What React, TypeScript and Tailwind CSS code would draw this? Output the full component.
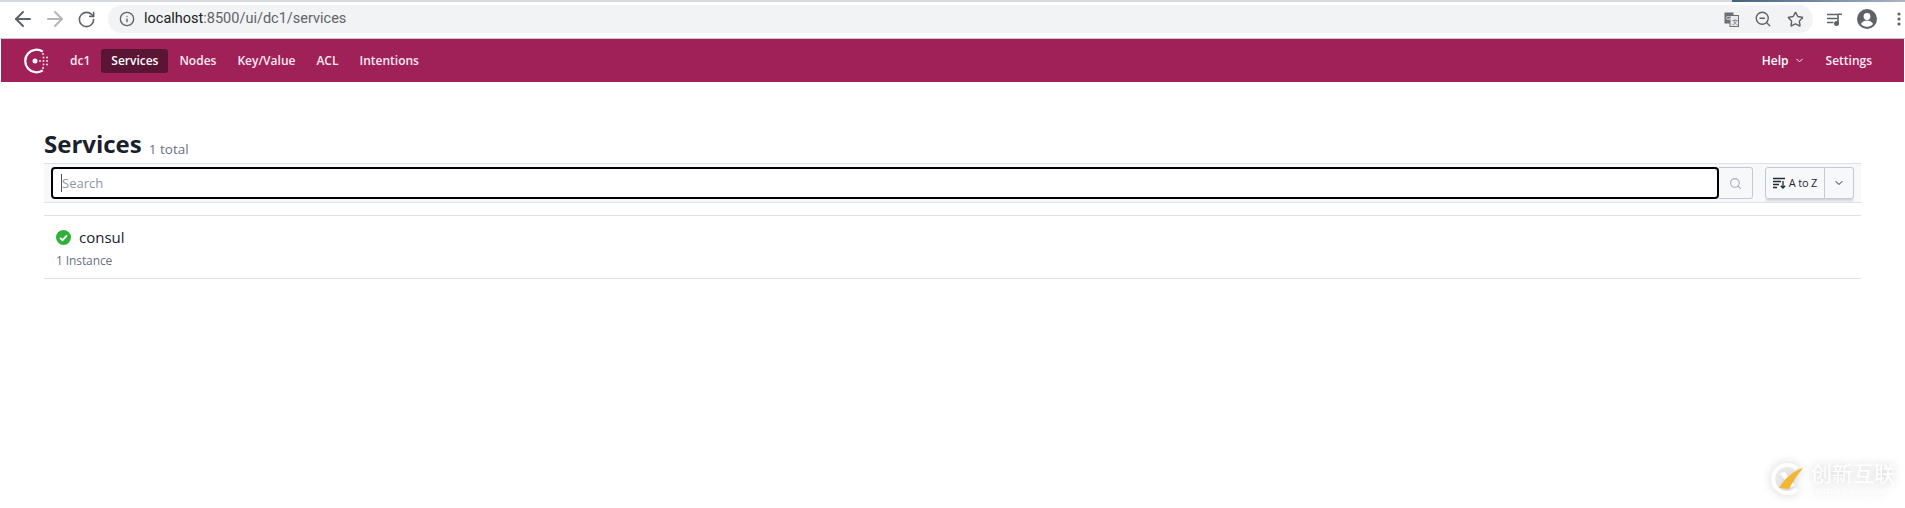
import { ArrowLeft, ArrowRight, RotateCw, Info, ZoomOut, Star, ChevronDown, Search } from 'lucide-react'

const NAV = [
  { label: 'Services', active: true },
  { label: 'Nodes' },
  { label: 'Key/Value' },
  { label: 'ACL' },
  { label: 'Intentions' },
]

function ConsulLogo() {
  return (
    <svg width="26" height="26" viewBox="0 0 26 26" fill="none">
      <path d="M19.8 3.600A11.300 11.300 0 1 0 19.800 22.400" stroke="#fff" strokeWidth="2.300" />
      <circle cx="12" cy="13" r="2.500" fill="#fff" />
      <g fill="#f3dbe5">
        <circle cx="17" cy="13" r="1" />
        <circle cx="20.500" cy="13" r="1" />
        <circle cx="24" cy="13" r="1" />
        <circle cx="20.500" cy="9.500" r="1" />
        <circle cx="24" cy="9.500" r="1" />
        <circle cx="20.500" cy="16.500" r="1" />
        <circle cx="24" cy="16.500" r="1" />
        <circle cx="20" cy="6" r="1" />
        <circle cx="20" cy="20" r="1" />
      </g>
    </svg>
  )
}

function SortIcon() {
  return (
    <svg width="13" height="12" viewBox="0 0 13 12" fill="none" stroke="#1f2937" strokeWidth="1.300">
      <path d="M0 1.500h12M0 4.500h8M0 7.500h6M0 10.500h4" />
      <path d="M10 4v7M7.800 8.800 10 11l2.200-2.200" />
    </svg>
  )
}

function QueueIcon() {
  return (
    <svg width="15" height="13" viewBox="0 0 15 13" fill="none" stroke="#5f6368" strokeWidth="1.600">
      <path d="M0 1.500h10.500M0 5.500h10.500M0 9.500h6.500" />
      <path d="M11 10.500V1.200h4" />
      <circle cx="9.500" cy="10.500" r="1.700" fill="#5f6368" />
    </svg>
  )
}

function Watermark() {
  return (
    <div className="absolute bottom-[13px] right-[10px] flex items-center gap-[8px] [filter:drop-shadow(0_0_5px_rgba(0,0,0,0.22))]">
      <svg width="32" height="32" viewBox="0 0 32 32" fill="none" className="mt-[5px]">
        <path d="M26 6A14 14 0 1 0 26 26" stroke="#fff" strokeWidth="4" />
        <path d="M9 10l5-1 10 14-5 1z" fill="#fff" />
        <path d="M8 25C14 15 22 8 32 5 27 11 22 18 18 26z" fill="#f3b533" />
      </svg>
      <div className="flex flex-col text-white">
        <span className="font-['Noto_Sans_CJK_SC',sans-serif] text-[21px] leading-[31px]">创新互联</span>
        <span className="text-[6.500px] leading-[7px] tracking-[0.4px]">CHUANG XIN HU LIAN</span>
      </div>
    </div>
  )
}

export default function App() {
  return (
    <div className="relative h-[508px] w-[1905px] overflow-hidden bg-white font-['Open_Sans','Noto_Sans',sans-serif] text-[#1f2937]">
      <div className="flex h-[2px]">
        <div className="flex-1 bg-[#d5dbe1]" />
        <div className="w-[173px] bg-gradient-to-r from-[#45607f] to-[#a9b6c4]" />
      </div>
      {/* barra do navegador */}
      <div className="flex h-[37px] items-center border-b border-[#c8c9cc] pb-[2px] pl-[11px] pr-[4px]">
        <ArrowLeft size={24} strokeWidth={2} className="text-[#5f6368]" />
        <ArrowRight size={24} strokeWidth={2} className="ml-[8px] text-[#b4b6b9]" />
        <RotateCw size={19} strokeWidth={2} className="ml-[10px] text-[#5f6368]" />
        <div className="ml-[12px] flex h-[28px] flex-1 items-center rounded-full bg-[#f1f3f4] pl-[11px] pr-[9px]">
          <Info size={16} strokeWidth={2} className="text-[#5f6368]" />
          <span className="ml-[9px] font-['Roboto',sans-serif] text-[14.500px] text-[#5f6368]">
            <span className="text-[#202124]">localhost</span>:8500/ui/dc1/services
          </span>
          <div className="flex-1" />
          <svg width="15" height="15" viewBox="0 0 15 15" className="mr-[15px]">
            <rect x="0.500" y="0.500" width="9" height="11" fill="#6b6f74" />
            <rect x="6" y="3.500" width="8.500" height="11" fill="#e8eaed" stroke="#6b6f74" />
            <text x="2" y="8" fontSize="6" fill="#fff" fontFamily="Liberation Sans">G</text>
            <text x="8" y="12" fontSize="6" fill="#5f6368" fontFamily="Noto Sans CJK SC">文</text>
          </svg>
          <ZoomOut size={18} strokeWidth={1.800} className="mr-[15px] text-[#5f6368]" />
          <Star size={17} strokeWidth={2} className="text-[#5f6368]" />
        </div>
        <div className="ml-[14px]">
          <QueueIcon />
        </div>
        <svg width="20" height="20" viewBox="0 0 20 20" className="ml-[15px]">
          <circle cx="10" cy="10" r="10" fill="#5f6368" />
          <circle cx="10" cy="7.500" r="3.400" fill="#fff" />
          <path d="M3.800 15c1.500-2.600 3.800-3.600 6.200-3.600s4.700 1 6.200 3.600a8 8 0 0 1-12.400 0z" fill="#fff" />
        </svg>
        <svg width="4" height="14" viewBox="0 0 4 14" className="ml-[20px]" fill="#5f6368">
          <circle cx="2" cy="2" r="1.600" />
          <circle cx="2" cy="7" r="1.600" />
          <circle cx="2" cy="12" r="1.600" />
        </svg>
      </div>

      {/* cabeçalho */}
      <header className="mx-px flex h-[43px] items-center bg-[#a02157] pl-[22px] pr-[32px] text-[12px] font-semibold text-[#f7eaf0]">
        <ConsulLogo />
        <span className="ml-[11px] px-[10px]">dc1</span>
        <nav className="ml-px flex items-center gap-px">
          {NAV.map((item) => (
            <span
              key={item.label}
              className={`rounded-[3px] px-[10px] py-[3px] ${item.active ? 'bg-[#5a1434] text-white' : ''}`}
            >
              {item.label}
            </span>
          ))}
        </nav>
        <div className="flex-1" />
        <span className="flex items-center text-white">
          Help
          <ChevronDown size={11} strokeWidth={2} className="ml-[5px]" />
        </span>
        <span className="ml-[21px]">Settings</span>
      </header>

      <main className="pl-[44px] pr-[44px]">
        <div className="flex h-[81px] items-end pb-[2px]">
          <h1 className="text-[24px] font-bold leading-[34px] text-[#1a202c]">Services</h1>
          <span className="mb-[3px] ml-[7px] text-[13.500px] leading-[18px] text-[#6b7280]">1 total</span>
        </div>
        <div className="flex h-[40px] items-center border-y border-[#dfe1e8] bg-[#f7f8fa] pl-[7px] pr-[7px]">
          <div className="relative flex-1">
            <input
              placeholder="Search"
              className="h-[32px] w-full rounded-[4px] border-2 border-black bg-white pl-[9px] text-[13px] outline-none placeholder:text-[#8d95a3]"
            />
            <span className="absolute left-[10px] top-[7px] h-[18px] w-px bg-[#4b5563]" />
          </div>
          <div className="flex h-[32px] w-[34px] items-center justify-center rounded-r-[3px] border border-l-0 border-[#c5c9d6]">
            <Search size={13} strokeWidth={2} className="text-[#a6abb5]" />
          </div>
          <div className="ml-[12px] flex shadow-[0_3px_2px_-1px_rgba(0,0,0,0.15)]">
            <div className="flex h-[32px] w-[60px] items-center justify-center gap-[3px] rounded-l-[3px] border border-[#c5c9d6] text-[11px] tracking-[-0.2px]">
              <SortIcon />
              A to Z
            </div>
            <div className="flex h-[32px] w-[29px] items-center justify-center rounded-r-[3px] border border-l-0 border-[#c5c9d6]">
              <ChevronDown size={12} strokeWidth={2} />
            </div>
          </div>
        </div>
        <div className="mt-[12px] border-y border-[#dfe1e8] pb-[9px] pl-[12px] pt-[11px]">
          <div className="flex items-center">
            <svg width="15" height="15" viewBox="0 0 15 15">
              <circle cx="7.500" cy="7.500" r="7.500" fill="#2eb039" />
              <path d="M4 7.800l2.500 2.400L11 5.300" stroke="#fff" strokeWidth="1.800" fill="none" />
            </svg>
            <span className="ml-[8px] text-[15px] font-medium leading-[20px] text-[#1a202c]">consul</span>
          </div>
          <div className="mt-[6px] text-[12px] leading-[16px] tracking-[-0.1px] text-[#6b7280]">1 Instance</div>
        </div>
      </main>
      <Watermark />
    </div>
  )
}
